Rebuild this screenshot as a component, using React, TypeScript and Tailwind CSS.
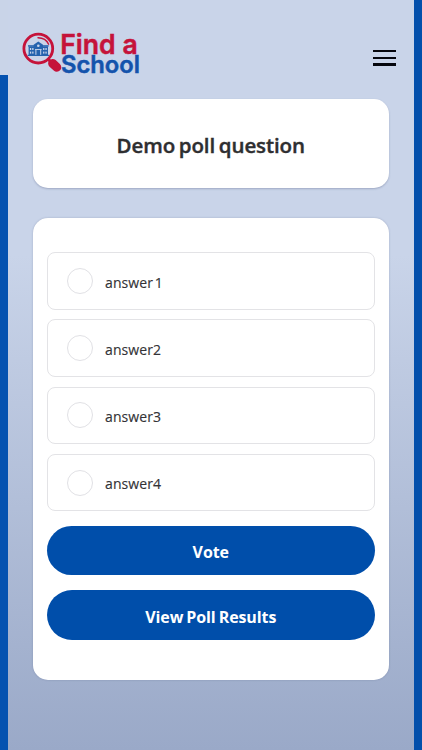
import React from 'react';

interface PollOption {
  id: number;
  label: string;
}

const options: PollOption[] = [
  { id: 1, label: 'answer 1' },
  { id: 2, label: 'answer2' },
  { id: 3, label: 'answer3' },
  { id: 4, label: 'answer4' },
];

const Logo = () => (
  <svg width="124" height="60" viewBox="0 0 124 60" role="img" aria-label="Find a School">
    {/* magnifying glass */}
    <circle cx="17.3" cy="28.6" r="14.4" fill="none" stroke="#c5133a" strokeWidth="2.8" />
    <path d="M26.5 38.5 L31 43" stroke="#c5133a" strokeWidth="3" />
    <path d="M31.6 43.4 L35.8 47.3" stroke="#c5133a" strokeWidth="9" strokeLinecap="round" />
    <path d="M17 17.7 C22 17.7 25.8 20 27.6 24.2" fill="none" stroke="#c5133a" strokeWidth="1.4" strokeLinecap="round" />
    {/* school building */}
    <g fill="#2563ae">
      <path d="M12.6 24.8 L17.3 21.6 L22 24.8 V36 H12.6 Z" />
      <rect x="7.6" y="26.4" width="19.4" height="9.4" />
      <rect x="7" y="25.2" width="6" height="1.4" />
      <rect x="21.6" y="25.2" width="6" height="1.4" />
      <rect x="6.6" y="34.8" width="21.4" height="1.2" />
    </g>
    <g fill="#c9d5ea">
      <circle cx="17.3" cy="25.8" r="1.3" />
      <rect x="8.9" y="28" width="1.3" height="2" />
      <rect x="11.2" y="28" width="1.3" height="2" />
      <rect x="22.1" y="28" width="1.3" height="2" />
      <rect x="24.4" y="28" width="1.3" height="2" />
      <rect x="8.9" y="31.6" width="1.3" height="2" />
      <rect x="11.2" y="31.6" width="1.3" height="2" />
      <rect x="22.1" y="31.6" width="1.3" height="2" />
      <rect x="24.4" y="31.6" width="1.3" height="2" />
      <rect x="14" y="29" width="6.6" height="0.9" />
      <rect x="14.4" y="29.9" width="1" height="4.9" />
      <rect x="19.2" y="29.9" width="1" height="4.9" />
    </g>
    <g className="font-['Inter',sans-serif] font-semibold" strokeWidth="0.5">
      <text x="39.2" y="33.5" fill="#c5133a" stroke="#c5133a" textLength="77.5" lengthAdjust="spacingAndGlyphs" className="text-[27.5px]">
        Find a
      </text>
      <text x="40" y="53.2" fill="#1453ac" stroke="#1453ac" textLength="79" lengthAdjust="spacingAndGlyphs" className="text-[24px]">
        School
      </text>
    </g>
  </svg>
);

const Header = () => (
  <header className="flex h-[99px] items-start justify-between pl-[13px] pr-[18px]">
    <div className="pt-5">
      <Logo />
    </div>
    <button type="button" aria-label="Menu" className="mt-[50px] flex w-[23px] flex-col gap-[4.2px]">
      <span className="h-[2.4px] w-full bg-[#05060d]" />
      <span className="h-[2.4px] w-full bg-[#05060d]" />
      <span className="h-[2.4px] w-full bg-[#05060d]" />
    </button>
  </header>
);

const OptionRow = ({ label }: { label: string }) => (
  <label className="flex h-[57.5px] items-center rounded-[8px] border border-[#e3e3e6] pl-[18.5px]">
    <input
      type="radio"
      name="poll"
      className="size-[26px] appearance-none rounded-full border border-[#e1e1e5] bg-white"
    />
    <span className="ml-[12.5px] mt-[2.5px] text-[14px] font-medium tracking-[0.1px] text-[#333336] [word-spacing:-2px] [-webkit-text-stroke:0.15px_#333336]">
      {label}
    </span>
  </label>
);

const PillButton = ({ children }: { children: React.ReactNode }) => (
  <button
    type="button"
    className="flex h-[49.5px] w-full items-center justify-center rounded-full bg-[#004eaa] pt-[3px] text-[16px] font-bold tracking-[-0.1px] text-white [word-spacing:-1px]"
  >
    {children}
  </button>
);

export default function App() {
  return (
    <div className="flex h-[750px] w-[422px] overflow-hidden bg-[#c9d4e8] font-['Open_Sans','Noto_Sans',sans-serif]">
      <div className="mt-[75px] w-2 shrink-0 bg-[#0552b0]" />
      <div className="flex-1 bg-[linear-gradient(180deg,#c9d4e9_0%,#c9d4e9_34%,#9aa9c8_100%)]">
        <Header />
        <main className="flex flex-col gap-[30px] pl-[24.5px] pr-[25px]">
          <section className="flex h-[89px] items-center justify-center rounded-[15px] bg-white pt-[4px] shadow-[0_1px_2px_rgba(60,70,110,0.3)]">
            <h1 className="whitespace-nowrap text-[20.5px] font-semibold tracking-[-0.1px] text-[#2e2e30] [word-spacing:-1.5px] [-webkit-text-stroke:0.4px_#2e2e30]">
              Demo poll question
            </h1>
          </section>
          <section className="h-[461.5px] rounded-[15px] bg-white px-[14.5px] pt-[34px] shadow-[0_0_2px_rgba(60,70,110,0.3)]">
            <div className="flex flex-col gap-[9.8px]">
              {options.map((option) => (
                <OptionRow key={option.id} label={option.label} />
              ))}
            </div>
            <div className="mt-[14.5px] flex flex-col gap-[15px]">
              <PillButton>Vote</PillButton>
              <PillButton>View Poll Results</PillButton>
            </div>
          </section>
        </main>
      </div>
      <div className="w-2 shrink-0 bg-[#034fab]" />
    </div>
  );
}
